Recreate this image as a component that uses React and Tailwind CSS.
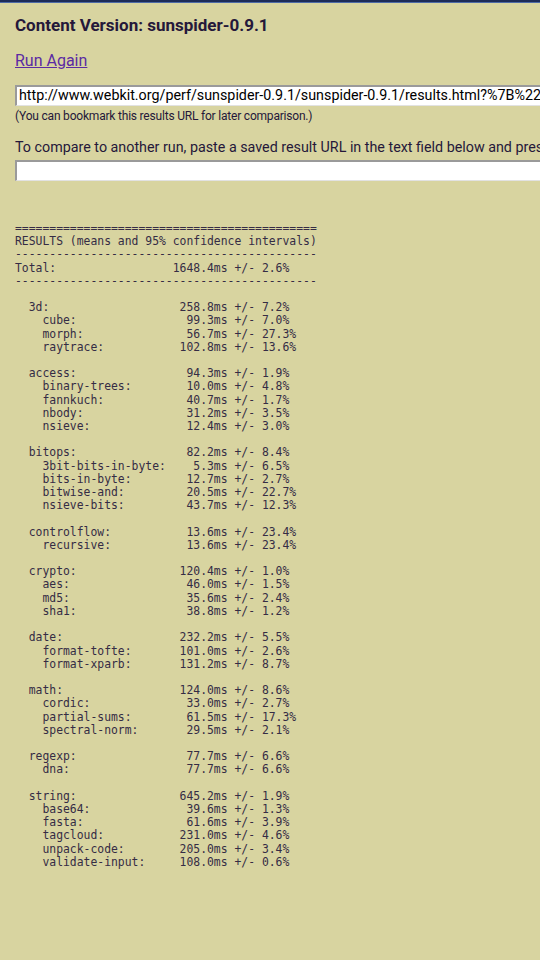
const rows = [
  '============================================',
  'RESULTS (means and 95% confidence intervals)',
  '--------------------------------------------',
  'Total:                 1648.4ms +/- 2.6%',
  '--------------------------------------------',
  '',
  '  3d:                   258.8ms +/- 7.2%',
  '    cube:                99.3ms +/- 7.0%',
  '    morph:               56.7ms +/- 27.3%',
  '    raytrace:           102.8ms +/- 13.6%',
  '',
  '  access:                94.3ms +/- 1.9%',
  '    binary-trees:        10.0ms +/- 4.8%',
  '    fannkuch:            40.7ms +/- 1.7%',
  '    nbody:               31.2ms +/- 3.5%',
  '    nsieve:              12.4ms +/- 3.0%',
  '',
  '  bitops:                82.2ms +/- 8.4%',
  '    3bit-bits-in-byte:    5.3ms +/- 6.5%',
  '    bits-in-byte:        12.7ms +/- 2.7%',
  '    bitwise-and:         20.5ms +/- 22.7%',
  '    nsieve-bits:         43.7ms +/- 12.3%',
  '',
  '  controlflow:           13.6ms +/- 23.4%',
  '    recursive:           13.6ms +/- 23.4%',
  '',
  '  crypto:               120.4ms +/- 1.0%',
  '    aes:                 46.0ms +/- 1.5%',
  '    md5:                 35.6ms +/- 2.4%',
  '    sha1:                38.8ms +/- 1.2%',
  '',
  '  date:                 232.2ms +/- 5.5%',
  '    format-tofte:       101.0ms +/- 2.6%',
  '    format-xparb:       131.2ms +/- 8.7%',
  '',
  '  math:                 124.0ms +/- 8.6%',
  '    cordic:              33.0ms +/- 2.7%',
  '    partial-sums:        61.5ms +/- 17.3%',
  '    spectral-norm:       29.5ms +/- 2.1%',
  '',
  '  regexp:                77.7ms +/- 6.6%',
  '    dna:                 77.7ms +/- 6.6%',
  '',
  '  string:               645.2ms +/- 1.9%',
  '    base64:              39.6ms +/- 1.3%',
  '    fasta:               61.6ms +/- 3.9%',
  '    tagcloud:           231.0ms +/- 4.6%',
  '    unpack-code:        205.0ms +/- 3.4%',
  '    validate-input:     108.0ms +/- 0.6%',
];

const resultUrl =
  'http://www.webkit.org/perf/sunspider-0.9.1/sunspider-0.9.1/results.html?%7B%22v%22:%20%22sunspider-0.9.1%22';

export default function App() {
  return (
    <div className="w-[540px] h-[960px] overflow-hidden bg-[#d8d4a0] border-t-2 border-[#1d2b58] text-[#25183a] font-['Roboto',sans-serif]">
      <div className="h-px bg-[#4d6aa6]" />
      <div className="pl-[15px] pt-[12px]">
        <h1 className="text-[17px] leading-[20px] font-bold">Content Version: sunspider-0.9.1</h1>

        <p className="mt-[16px] text-[16px] leading-[19px]">
          <a href="#" className="text-[#5b2aa3] underline">Run Again</a>
        </p>

        <div className="mt-[15px] w-[600px] h-[21px] bg-white border-t-2 border-l-2 border-[#9a9a9a] border-b border-b-[#e2e2e2] flex items-center pl-[2px] text-[14.3px] text-black whitespace-nowrap overflow-hidden">
          {resultUrl}
        </div>
        <p className="mt-[3px] text-[12px] leading-[14px] tracking-[-0.2px]">
          (You can bookmark this results URL for later comparison.)
        </p>

        <p className="mt-[16px] text-[14.3px] leading-[17px] whitespace-nowrap">
          To compare to another run, paste a saved result URL in the text field below and press enter:
        </p>
        <div className="mt-[4px] w-[600px] h-[21px] bg-white border-t-2 border-l-2 border-[#9a9a9a] border-b border-b-[#e2e2e2]" />

        <pre className="mt-[41px] text-[11.4px] leading-[13.2px] text-[#352c45] font-['DejaVu_Sans_Mono',monospace]">
          {rows.join('\n')}
        </pre>
      </div>
    </div>
  );
}
